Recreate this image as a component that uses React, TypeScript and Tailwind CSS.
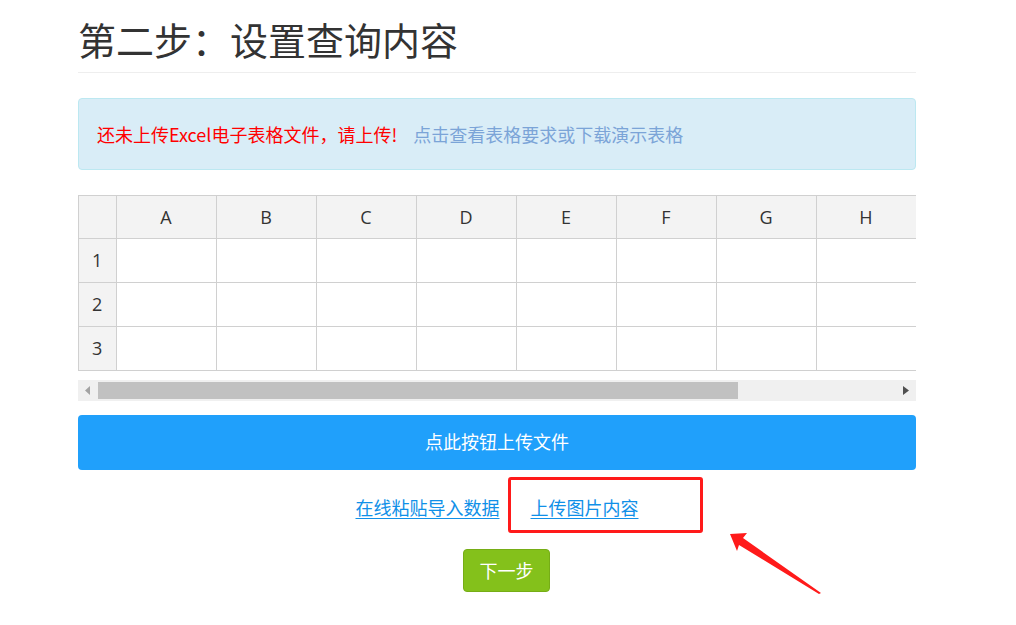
import React from "react";

const cols = ["A", "B", "C", "D", "E", "F", "G", "H"];
const rows = [1, 2, 3];

function Sheet() {
  return (
    <div className="mt-[25px] overflow-hidden border-l border-[#d0d0d0]">
      <table
        className="border-collapse table-fixed text-[18px] text-[#333]"
        style={{ fontFamily: '"Open Sans", "Noto Sans", sans-serif' }}
      >
        <thead>
          <tr className="h-[43px] bg-[#f3f3f3]">
            <th className="w-[37px] min-w-[37px] border border-l-0 border-[#d0d0d0] font-normal"></th>
            {cols.map((c) => (
              <th key={c} className="w-[100px] min-w-[100px] border border-[#d0d0d0] font-normal">
                {c}
              </th>
            ))}
          </tr>
        </thead>
        <tbody>
          {rows.map((r) => (
            <tr key={r} className="h-[44px]">
              <td className="border border-l-0 border-[#d0d0d0] bg-[#f3f3f3] pl-[13px]">{r}</td>
              {cols.map((c) => (
                <td key={c} className="border border-[#d0d0d0] bg-white"></td>
              ))}
            </tr>
          ))}
        </tbody>
      </table>
    </div>
  );
}

function Scrollbar() {
  return (
    <div className="mt-[9px] flex h-[21px] items-center bg-[#f0f0f0]">
      <div className="flex w-[20px] items-center justify-center">
        <svg width="6" height="9" viewBox="0 0 6 9">
          <path d="M5 0 L0 4.5 L5 9 Z" fill="#a3a3a3" />
        </svg>
      </div>
      <div className="h-[17px] w-[640px] bg-[#c1c1c1]"></div>
      <div className="flex-1"></div>
      <div className="flex w-[20px] items-center justify-center">
        <svg width="6" height="9" viewBox="0 0 6 9">
          <path d="M0 0 L6 4.5 L0 9 Z" fill="#505050" />
        </svg>
      </div>
    </div>
  );
}

export default function App() {
  return (
    <div
      className="relative min-h-[625px] w-[1016px] bg-white"
      style={{ fontFamily: '"Noto Sans CJK SC", "Noto Sans", sans-serif' }}
    >
      <div className="ml-[78px] w-[838px] pt-[13px]">
        <h1 className="border-b border-[#eeeeee] pb-[8px] text-[38px] leading-[51px] text-[#333]">
          第二步：设置查询内容
        </h1>

        <div className="mt-[25px] flex h-[72px] items-center rounded border border-[#bce8f1] bg-[#d9edf7] pl-[18px] text-[18px]">
          <span className="text-[#ff0000]">还未上传Excel电子表格文件，请上传!</span>
          <span className="ml-[16px] text-[#7ba4d7]">点击查看表格要求或下载演示表格</span>
        </div>

        <Sheet />
        <Scrollbar />

        <button className="mt-[14px] flex h-[55px] w-full items-center justify-center rounded bg-[#20a0fb] pb-[2px] text-[18px] text-white">
          点此按钮上传文件
        </button>

        <div className="relative mt-[24px] flex justify-center gap-[31px] text-[18px] leading-[26px] text-[#1090e8]">
          <a className="underline underline-offset-[3px]">在线粘贴导入数据</a>
          <a className="underline underline-offset-[3px]">上传图片内容</a>
          <div className="absolute left-[430px] top-[-17px] h-[56px] w-[195px] rounded-[3px] border-[3px] border-[#ff1a1a]"></div>
        </div>

        <div className="mt-[29px] flex justify-center">
          <button className="ml-[19px] h-[43px] w-[87px] rounded border border-[#76ad16] bg-[#84c11b] text-[18px] text-white">
            下一步
          </button>
        </div>
      </div>

      <svg className="absolute left-[725px] top-[528px]" width="100" height="70" viewBox="0 0 100 70">
        <polygon points="5,6 22,5 18,10 96,65 94,66 14,17 12,23" fill="#ff1a1a" />
      </svg>
    </div>
  );
}
